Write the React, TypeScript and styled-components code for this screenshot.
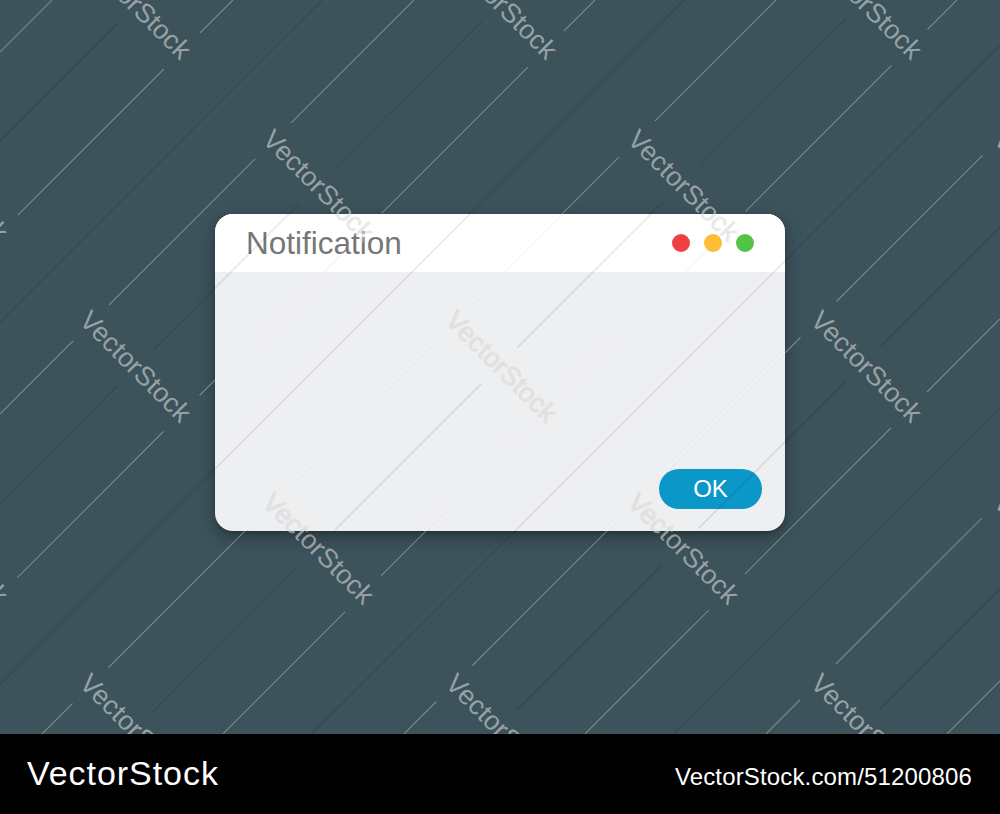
import React from "react";
import styled, { createGlobalStyle } from "styled-components";

const STAGE_W = 1000;
const STAGE_H = 734;
const TILE_X = 365.5;
const TILE_Y = 181.5;

type Mark = { x: number; y: number };

// watermark centres, a staggered grid
const marks: Mark[] = [];
for (let r = -1; r <= 5; r++) {
    const y = 4 + r * TILE_Y;
    const shift = r % 2 !== 0 ? -182.75 : 0;
    for (let k = -1; k <= 3; k++) {
        const x = 135 + shift + k * TILE_X;
        if (x > -120 && x < 1120 && y > -90 && y < 830) marks.push({ x, y });
    }
}

// diagonal lines x + y = c, broken where a watermark crosses them
const lineSegments = (start: number) => {
    const segs: [number, number, number][] = [];
    for (let c = start; c < STAGE_W + STAGE_H; c += 181) {
        const from = Math.max(0, c - STAGE_H);
        const to = Math.min(STAGE_W, c);
        const gaps = marks
            .map((m) => {
                const t = (c - m.x - m.y) / 2;
                return Math.abs(t) < 60 ? m.x + t : null;
            })
            .filter((g): g is number => g !== null)
            .sort((a, b) => a - b);
        let a = from;
        gaps.forEach((g) => {
            if (g - 18 > a) segs.push([c, a, Math.min(g - 18, to)]);
            a = Math.max(a, g + 18);
        });
        if (a < to) segs.push([c, a, to]);
    }
    return segs;
};

const brightLines = lineSegments(52);
const darkLines = lineSegments(141);

const GlobalStyle = createGlobalStyle`
    html, body {
        margin: 0;
        padding: 0;
        background: #000;
    }
    * {
        box-sizing: border-box;
    }
`;

const Page = styled.div`
    width: 1000px;
    height: 814px;
    display: flex;
    flex-direction: column;
    font-family: "Liberation Sans", Arial, sans-serif;
`;

const Stage = styled.div`
    position: relative;
    height: ${STAGE_H}px;
    overflow: hidden;
    background: #3c535c;
    display: flex;
    justify-content: center;
    padding-top: 214px;
`;

const Window = styled.div`
    width: 570px;
    height: 317px;
    border-radius: 18px;
    overflow: hidden;
    display: flex;
    flex-direction: column;
    background: #eeeff1;
    box-shadow: 0 6px 16px rgba(0, 0, 0, 0.35), 0 1px 3px rgba(0, 0, 0, 0.2);
`;

const TitleBar = styled.div`
    height: 58px;
    display: flex;
    align-items: center;
    justify-content: space-between;
    padding: 0 31px 0 31px;
    background: #ffffff;
`;

const Title = styled.h1`
    margin: 0;
    font-size: 31.5px;
    font-weight: 400;
    color: #777777;
`;

const Dots = styled.div`
    display: flex;
    gap: 14px;
`;

const Dot = styled.span<{ $color: string }>`
    width: 18px;
    height: 18px;
    border-radius: 50%;
    background: ${(p) => p.$color};
`;

const Body = styled.div`
    flex: 1;
    display: flex;
    align-items: flex-end;
    justify-content: flex-end;
    padding: 0 23px 22px 0;
`;

const OkButton = styled.button`
    width: 103px;
    height: 40px;
    border: none;
    border-radius: 20px;
    background: #0b98c9;
    color: #ffffff;
    font-family: "Liberation Sans", Arial, sans-serif;
    font-size: 24px;
    padding: 0;
`;

const Overlay = styled.div`
    position: absolute;
    inset: 0;
    pointer-events: none;
`;

const LineArt = styled.svg`
    position: absolute;
    inset: 0;
`;

const Watermark = styled.span`
    position: absolute;
    transform: translate(-50%, -50%) rotate(45deg);
    white-space: nowrap;
    font-family: "Liberation Sans", Arial, sans-serif;
    font-size: 27px;
    color: rgba(255, 255, 255, 0.5);
    text-shadow: 0 0 1px rgba(0, 0, 0, 0.2);
`;

const Footer = styled.footer`
    height: 80px;
    background: #000;
    display: flex;
    align-items: baseline;
    justify-content: space-between;
    padding: 22px 28px 0 27px;
    color: #ffffff;
`;

const Brand = styled.span`
    font-size: 34px;
    letter-spacing: 0.95px;
    line-height: 1;
`;

const StockId = styled.span`
    font-size: 24px;
    letter-spacing: 0.15px;
    line-height: 1;
`;

export default function App() {
    return (
        <Page>
            <GlobalStyle />
            <Stage>
                <Window>
                    <TitleBar>
                        <Title>Notification</Title>
                        <Dots>
                            <Dot $color="#ef4145" />
                            <Dot $color="#fdbd36" />
                            <Dot $color="#50c444" />
                        </Dots>
                    </TitleBar>
                    <Body>
                        <OkButton>OK</OkButton>
                    </Body>
                </Window>

                {/* watermark */}
                <Overlay>
                    <LineArt width={STAGE_W} height={STAGE_H} viewBox={`0 0 ${STAGE_W} ${STAGE_H}`}>
                        {darkLines.map(([c, a, b], i) => (
                            <line key={`d${i}`} x1={a} y1={c - a} x2={b} y2={c - b} stroke="rgba(0,0,0,0.12)" strokeWidth={1.2} />
                        ))}
                        {brightLines.map(([c, a, b], i) => (
                            <g key={`b${i}`}>
                                <line x1={a} y1={c - a + 1} x2={b} y2={c - b + 1} stroke="rgba(0,0,0,0.07)" strokeWidth={1} />
                                <line x1={a} y1={c - a} x2={b} y2={c - b} stroke="rgba(255,255,255,0.32)" strokeWidth={1.1} />
                            </g>
                        ))}
                    </LineArt>
                    {marks.map((m, i) => (
                        <Watermark key={i} style={{ left: m.x, top: m.y }}>
                            VectorStock
                        </Watermark>
                    ))}
                </Overlay>
            </Stage>
            <Footer>
                <Brand>VectorStock</Brand>
                <StockId>VectorStock.com/51200806</StockId>
            </Footer>
        </Page>
    );
}
